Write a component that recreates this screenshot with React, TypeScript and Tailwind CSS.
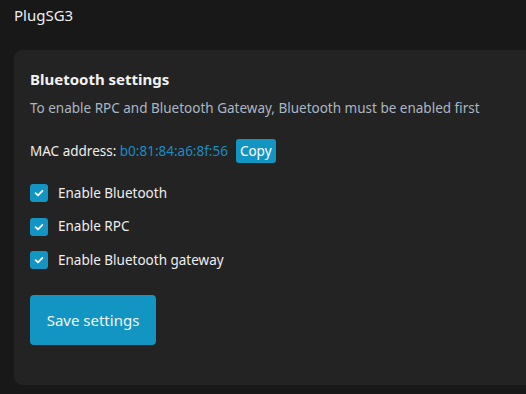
import React from "react";

function Check({ label }: { label: string }) {
  return (
    <label className="flex items-center gap-[10px] h-[18px]">
      <span className="w-[18px] h-[18px] rounded-[3px] bg-[#1395c3] flex items-center justify-center">
        <svg width="10" height="10" viewBox="0 0 10 10" fill="none">
          <path d="M1.6 5.2 L4 7.4 L8.4 2.8" stroke="#ffffff" strokeWidth="1.8" strokeLinecap="round" strokeLinejoin="round" />
        </svg>
      </span>
      <span className="text-[13.5px] text-[#eeeeee]">{label}</span>
    </label>
  );
}

export default function App() {
  return (
    <div
      className="w-[526px] h-[394px] overflow-hidden bg-[#181818] text-[#eeeeee]"
      style={{ fontFamily: '"Noto Sans", "Open Sans", sans-serif' }}
    >
      <div className="pl-[14px] pt-[5px] h-[50px] text-[15px] leading-[20px]">PlugSG3</div>
      <div className="ml-[14px] mr-[-10px] h-[335px] rounded-lg bg-[#232323] px-[16px] pt-[19px]">
        <h2 className="text-[15px] font-bold leading-[20px] text-[#f2f2f2]">Bluetooth settings</h2>
        <p className="mt-[10px] text-[13.5px] leading-[18px] text-[#aab6c2]">
          To enable RPC and Bluetooth Gateway, Bluetooth must be enabled first
        </p>
        <div className="mt-[22px] flex items-center h-[24px] text-[13.5px]">
          <span className="text-[#eeeeee]">MAC address:&nbsp;</span>
          <span className="text-[#1b8cc2]">b0:81:84:a6:8f:56</span>
          <button className="ml-[8px] h-[24px] px-[4px] rounded-[3px] bg-[#1395c3] text-white text-[13.5px]">Copy</button>
        </div>
        <div className="mt-[21px] flex flex-col gap-[15.5px]">
          <Check label="Enable Bluetooth" />
          <Check label="Enable RPC" />
          <Check label="Enable Bluetooth gateway" />
        </div>
        <button className="mt-[26px] w-[126px] h-[50px] rounded-[4px] bg-[#1395c3] text-[#f4f4f4] text-[15px]">
          Save settings
        </button>
      </div>
    </div>
  );
}
